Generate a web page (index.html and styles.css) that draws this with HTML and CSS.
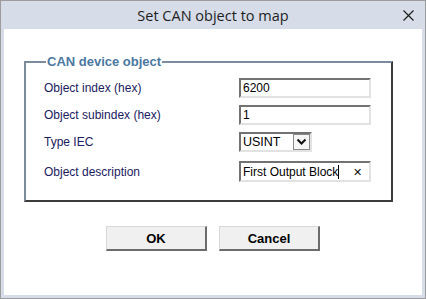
FILE: index.html
```html
<!DOCTYPE html>
<html lang="en">
<head>
    <meta charset="utf-8">
    <title>Set CAN object to map</title>
    <link rel="stylesheet" href="styles.css">
</head>
<body>
<div class="window">
    <div class="titlebar">
        <span class="title">Set CAN object to map</span>
        <span class="close">
            <svg width="11" height="11" viewBox="0 0 11 11">
                <path d="M0.5 0.5 L10.5 10.5 M10.5 0.5 L0.5 10.5" stroke="#1e1e1e" stroke-width="1.2" fill="none"/>
            </svg>
        </span>
    </div>

    <div class="content">
        <fieldset class="group">
            <legend>CAN device object</legend>
            <div class="form-grid">
                <label for="objIndex">Object index (hex)</label>
                <input type="text" id="objIndex" class="field" value="6200">

                <label for="objSub">Object subindex (hex)</label>
                <input type="text" id="objSub" class="field" value="1">

                <label>Type IEC</label>
                <div class="select">
                    <span class="select-value">USINT</span>
                    <span class="select-btn">
                        <svg width="11" height="8" viewBox="0 0 11 8">
                            <path d="M1.5 1.5 L5.5 5.5 L9.5 1.5" stroke="#111" stroke-width="2" fill="none"/>
                        </svg>
                    </span>
                </div>

                <label for="objDesc" class="last">Object description</label>
                <div class="field desc last">
                    <span class="desc-text">First Output Block</span><span class="caret"></span>
                    <span class="clear">&#x2715;</span>
                </div>
            </div>
        </fieldset>

        <div class="buttons">
            <button class="btn">OK</button>
            <button class="btn">Cancel</button>
        </div>
    </div>
</div>
</body>
</html>
```

FILE: styles.css
```css
body {
    margin: 0;
    padding: 0;
    background-color: #fff;
    font-family: 'Liberation Sans', Arial, sans-serif;
}

.window {
    width: 426px;
    height: 299px;
    box-sizing: border-box;
    border: 1px solid #9c9c9c;
    background-color: #d6dce8; /* light blue frame */
    padding: 0 3px 3px 3px;
    display: flex;
    flex-direction: column;
}

.titlebar {
    height: 28px;
    flex-shrink: 0;
    display: flex;
    align-items: center;
    justify-content: center;
    position: relative;
}

.title {
    font-family: 'Open Sans', 'Noto Sans', sans-serif;
    font-size: 14.5px;
    color: #1e1e1e;
    margin-top: 1px;
}

.close {
    position: absolute;
    right: 8px;
    top: 9px;
    width: 11px;
    height: 11px;
    display: flex;
}

.content {
    flex: 1;
    background-color: #fff;
    padding: 0 29px 0 20px;
}

.group {
    margin: 25px 0 0 0;
    padding: 9px 0 18px 18px;
    border-style: solid;
    border-width: 2px;
    border-color: #7d8c9c #3c3c3c #3c3c3c #7d8c9c;
}

.group legend {
    margin-left: 2px;
    padding: 0 1px;
    font-size: 13px;
    font-weight: bold;
    color: #4b78a0;
}

.form-grid {
    display: grid;
    grid-template-columns: 195px 132px;
    row-gap: 7px;
    align-items: center;
}

.form-grid .last {
    margin-top: 2px;
}

.form-grid label {
    font-size: 12px;
    color: #1a2060;
}

.field {
    width: 132px;
    height: 20px;
    box-sizing: border-box;
    margin: 0;
    padding: 0 0 0 2px;
    border-style: solid;
    border-width: 2px;
    border-color: #727272 #e2e2e2 #e2e2e2 #727272;
    font-family: 'Liberation Sans', Arial, sans-serif;
    font-size: 12px;
    color: #000;
    outline: none;
}

.desc {
    height: 21px;
    display: flex;
    align-items: center;
    position: relative;
}

.caret {
    width: 1px;
    height: 14px;
    background-color: #000;
}

.clear {
    position: absolute;
    right: 7px;
    top: 3px;
    font-size: 11px;
    color: #111;
}

.select {
    width: 73px;
    height: 20px;
    box-sizing: border-box;
    border-style: solid;
    border-width: 2px;
    border-color: #727272 #e2e2e2 #e2e2e2 #727272;
    display: flex;
    align-items: center;
    justify-content: space-between;
}

.select-value {
    padding-left: 2px;
    font-size: 12.5px;
    color: #000;
}

.select-btn {
    width: 17px;
    height: 16px;
    box-sizing: border-box;
    border: 1px solid #8a8a8a;
    background-color: #f6f6f6;
    display: flex;
    align-items: center;
    justify-content: center;
}

.buttons {
    display: flex;
    justify-content: center;
    gap: 12px;
    margin-top: 24px;
    padding-left: 9px;
}

.btn {
    width: 101px;
    height: 25px;
    box-sizing: border-box;
    background-color: #f0f0f0;
    border-style: solid;
    border-width: 1px 2px 2px 1px;
    border-color: #d8d8d8 #6c6c6c #6c6c6c #d8d8d8;
    font-family: 'Liberation Sans', Arial, sans-serif;
    font-size: 13px;
    font-weight: bold;
    color: #000;
    padding: 0;
}
```
